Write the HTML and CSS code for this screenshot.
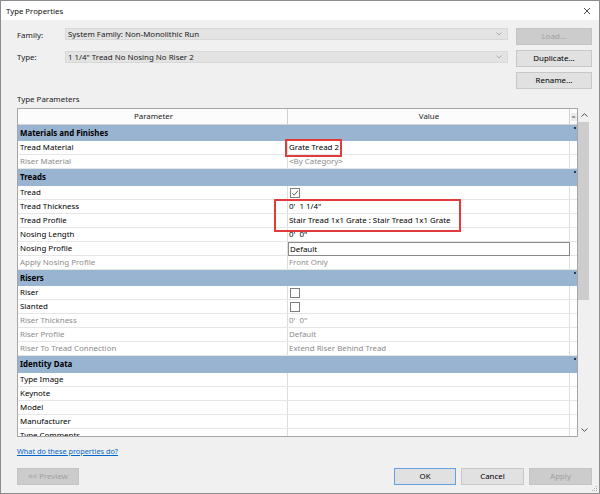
FILE: index.html
```html
<!DOCTYPE html>
<html>
<head>
<meta charset="utf-8">
<title>Type Properties</title>
<link rel="stylesheet" href="styles.css">
</head>
<body>
<div class="dialog">
  <div class="titlebar">
    <span class="title">Type Properties</span>
    <svg class="close" viewBox="0 0 6 6" width="6" height="6"><path d="M0 0L6 6M6 0L0 6" stroke="#222" stroke-width="0.8" fill="none"/></svg>
  </div>
  <div class="main">
    <div class="top">
      <div class="lbl">Family:</div>
      <div class="combo"><span>System Family: Non-Monolithic Run</span><svg class="chev" viewBox="0 0 6 4" width="6" height="4"><path d="M0.5 0.5L3 3L5.5 0.5" stroke="#a8a8a8" stroke-width="0.9" fill="none"/></svg></div>
      <button class="btn disabled">Load...</button>
      <div class="lbl">Type:</div>
      <div class="combo"><span>1 1/4" Tread No Nosing No Riser 2</span><svg class="chev" viewBox="0 0 6 4" width="6" height="4"><path d="M0.5 0.5L3 3L5.5 0.5" stroke="#a8a8a8" stroke-width="0.9" fill="none"/></svg></div>
      <button class="btn">Duplicate...</button>
      <div></div>
      <div></div>
      <button class="btn">Rename...</button>
    </div>
    <div class="section-label">Type Parameters</div>
    <div class="grid-wrap">
      <div class="table">
        <div class="row head"><div>Parameter</div><div>Value</div><div class="eqcell"><span class="eq">=</span></div></div>
        <div class="band">Materials and Finishes</div>
        <div class="row"><div>Tread Material</div><div>Grate Tread 2</div><div></div></div>
        <div class="row dis"><div>Riser Material</div><div>&lt;By Category&gt;</div><div></div></div>
        <div class="band tall">Treads</div>
        <div class="row"><div>Tread</div><div class="cbcell"><span class="cb"><svg viewBox="0 0 8 8" width="8" height="8"><path d="M1.2 4.2L3.2 6.2L7 1.6" stroke="#555" stroke-width="0.9" fill="none"/></svg></span></div><div></div></div>
        <div class="row"><div>Tread Thickness</div><div>0'  1 1/4"</div><div></div></div>
        <div class="row"><div>Tread Profile</div><div>Stair Tread 1x1 Grate : Stair Tread 1x1 Grate</div><div></div></div>
        <div class="row"><div>Nosing Length</div><div>0'  0"</div><div></div></div>
        <div class="row"><div>Nosing Profile</div><div class="boxed">Default</div><div></div></div>
        <div class="row dis"><div>Apply Nosing Profile</div><div>Front Only</div><div></div></div>
        <div class="band">Risers</div>
        <div class="row"><div>Riser</div><div class="cbcell"><span class="cb"></span></div><div></div></div>
        <div class="row"><div>Slanted</div><div class="cbcell"><span class="cb"></span></div><div></div></div>
        <div class="row dis"><div>Riser Thickness</div><div>0'  0"</div><div></div></div>
        <div class="row dis"><div>Riser Profile</div><div>Default</div><div></div></div>
        <div class="row dis"><div>Riser To Tread Connection</div><div>Extend Riser Behind Tread</div><div></div></div>
        <div class="band tall">Identity Data</div>
        <div class="row"><div>Type Image</div><div></div><div></div></div>
        <div class="row"><div>Keynote</div><div></div><div></div></div>
        <div class="row"><div>Model</div><div></div><div></div></div>
        <div class="row"><div>Manufacturer</div><div></div><div></div></div>
        <div class="row"><div>Type Comments</div><div></div><div></div></div>
        <div class="hl hl1"></div>
        <div class="hl hl2"></div>
      </div>
      <div class="scrollbar">
        <div class="sb-btn"><svg viewBox="0 0 7 4" width="7" height="4"><path d="M0.5 3.5L3.5 0.7L6.5 3.5" stroke="#555" stroke-width="1" fill="none"/></svg></div>
        <div class="thumb"></div>
        <div class="track"></div>
        <div class="sb-btn"><svg viewBox="0 0 7 4" width="7" height="4"><path d="M0.5 0.5L3.5 3.3L6.5 0.5" stroke="#555" stroke-width="1" fill="none"/></svg></div>
      </div>
    </div>
    <a class="link" href="#">What do these properties do?</a>
    <div class="footer">
      <button class="btn disabled w62">&lt;&lt; Preview</button>
      <div class="spacer"></div>
      <button class="btn default w62">OK</button>
      <button class="btn w63">Cancel</button>
      <button class="btn disabled w63">Apply</button>
    </div>
  </div>
  <svg class="grip" viewBox="0 0 6 6" width="6" height="6"><g fill="#b0b0b0"><rect x="4" y="0" width="1" height="1"/><rect x="2" y="2" width="1" height="1"/><rect x="4" y="2" width="1" height="1"/><rect x="0" y="4" width="1" height="1"/><rect x="2" y="4" width="1" height="1"/><rect x="4" y="4" width="1" height="1"/></g></svg>
</div>
</body>
</html>
```

FILE: styles.css
```css
* { box-sizing: border-box; }
html, body { margin: 0; padding: 0; }
body {
  width: 600px;
  height: 494px;
  overflow: hidden;
  font-family: "Noto Sans", "Segoe UI", sans-serif;
  font-size: 7.9px;
  color: #000;
  background: #fff;
}
.dialog {
  position: relative;
  width: 600px;
  height: 494px;
  border: 1px solid #8c8c8c;
  background: #f0f0f0;
  display: flex;
  flex-direction: column;
}
.titlebar {
  height: 19px;
  flex: none;
  background: #fff;
  display: flex;
  align-items: center;
  justify-content: space-between;
  padding: 0 9px 0 5px;
  font-size: 7.8px;
  color: #111;
}
.close { display: block; }
.main {
  padding: 8px 7px 0 16px;
  display: flex;
  flex-direction: column;
}
.top {
  display: grid;
  grid-template-columns: 40px 1fr 76px;
  grid-template-rows: 17px 17px 17px;
  column-gap: 8px;
  row-gap: 5px;
}
.lbl {
  line-height: 12px;
  align-self: start;
  margin-top: 1px;
  color: #222;
}
.combo {
  align-self: start;
  height: 12px;
  background: #e3e3e3;
  border: 1px solid #d8d8d8;
  display: flex;
  align-items: center;
  justify-content: space-between;
  padding: 0 5px 0 2px;
  line-height: 10px;
  color: #1a1a1a;
}
.combo + .btn + .lbl + .combo { margin-top: 1px; }
.chev { display: block; }
.btn {
  height: 17px;
  border: 1px solid #c8c8c8;
  background: #e1e1e1;
  font: inherit;
  color: #000;
  padding: 0;
  margin: 0;
  line-height: 15px;
  text-align: center;
}
.btn.disabled {
  background: #cccccc;
  border-color: #c4c4c4;
  color: #a0a0a0;
}
.btn.default { border-color: #5fa2e6; }
.w62 { width: 62px; }
.w63 { width: 63px; }
.section-label {
  margin: 4px 0 3px;
  line-height: 12px;
  color: #222;
}
.grid-wrap {
  display: flex;
  height: 329px;
  margin-right: 2px;
}
.table {
  position: relative;
  width: 561px;
  height: 100%;
  border: 1px solid #a6a6a6;
  background: #fff;
  overflow: hidden;
}
.row {
  display: grid;
  grid-template-columns: 270px 282px 7px;
  height: 14px;
  border-bottom: 1px solid #e6e6e6;
  line-height: 13px;
}
.row > div {
  border-right: 1px solid #dedede;
  padding-left: 2px;
  white-space: pre;
  overflow: hidden;
}
.row > div:nth-child(2) { padding-left: 1px; }
.row > div:last-child { border-right: none; }
.row.dis { color: #8c8c8c; }
.row.head {
  height: 16px;
  line-height: 15px;
  background: #fcfcfc;
  border-bottom: 1px solid #d4d4d4;
  text-align: center;
  color: #222;
}
.row.head > div { border-right-color: #d0d0d0; }
.eqcell { padding: 0 !important; display: flex; align-items: center; justify-content: center; }
.eq {
  display: block;
  width: 6px;
  height: 8px;
  line-height: 7px;
  font-size: 7px;
  text-align: center;
  background: #eaeaea;
  color: #555;
}
.band {
  position: relative;
  height: 16px;
  line-height: 16px;
  background: #99b4d1;
  font-weight: bold;
  padding-left: 2px;
}
.band.tall { height: 17px; line-height: 17px; }
.band::after {
  content: "";
  position: absolute;
  right: 1px;
  top: 2px;
  width: 2px;
  height: 2px;
  background: #2a3a55;
}
.cbcell { display: flex; align-items: center; }
.cb {
  display: flex;
  align-items: center;
  justify-content: center;
  width: 10px;
  height: 10px;
  border: 1px solid #7f7f7f;
  background: #fff;
  margin-left: 1px;
}
.cb svg { display: block; }
.row > div.boxed {
  border: 1px solid #8a8a8a;
  height: 14px;
  line-height: 12px;
  margin-right: 0;
}
.hl {
  position: absolute;
  border: 2px solid #e23b3b;
}
.hl1 { left: 267px; top: 30px; width: 57px; height: 18px; }
.hl2 { left: 256px; top: 90px; width: 187px; height: 33px; }
.scrollbar {
  width: 12px;
  height: 100%;
  display: flex;
  flex-direction: column;
  background: #f0f0f0;
}
.sb-btn {
  height: 14px;
  flex: none;
  display: flex;
  align-items: center;
  justify-content: center;
}
.sb-btn svg { display: block; }
.thumb {
  height: 178px;
  flex: none;
  background: #cdcdcd;
  margin-right: 1px;
}
.track { flex: 1; }
.link {
  align-self: flex-start;
  margin-top: 8px;
  line-height: 12px;
  font-size: 7.3px;
  color: #0066cc;
  text-decoration: underline;
}
.footer {
  margin-top: 11px;
  display: flex;
  gap: 5px;
}
.spacer { flex: 1; }
.grip {
  position: absolute;
  right: 1px;
  bottom: 1px;
}
```
